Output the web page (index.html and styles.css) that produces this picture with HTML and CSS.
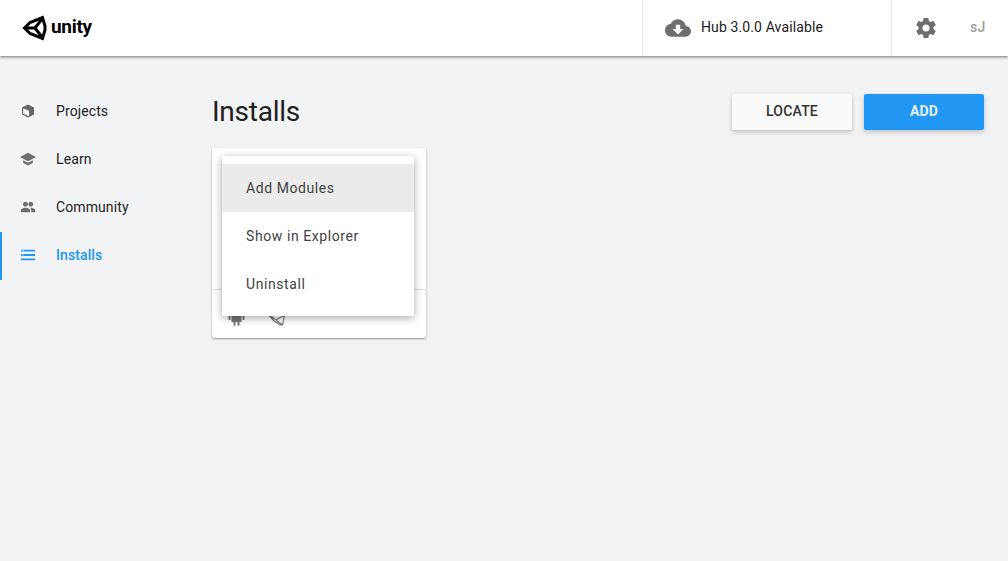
FILE: index.html
```html
<!DOCTYPE html>
<html lang="en">
<head>
<meta charset="utf-8">
<title>Unity Hub</title>
<link rel="stylesheet" href="styles.css">
</head>
<body>
<header class="topbar">
  <div class="brand">
    <svg class="brand-mark" viewBox="0 0 25 26" width="25" height="26"><path fill="none" stroke="#000" stroke-width="3" stroke-linejoin="miter" d="M2.500 13 8 7.500 20.500 2.500 23 11V15L20.500 23.500 8 18.500ZM2.500 13H13M13 13 20 4M13 13 20 22"/></svg>
    <span class="brand-name">unity</span>
  </div>
  <div class="update">
    <svg class="update-icon" viewBox="0 0 24 24" width="26" height="26"><path fill="#6e6e6e" d="M19.35 10.04A7.49 7.49 0 0 0 12 4C9.11 4 6.6 5.64 5.35 8.04A5.994 5.994 0 0 0 0 14c0 3.31 2.69 6 6 6h13c2.76 0 5-2.24 5-5 0-2.64-2.05-4.78-4.65-4.96ZM17 13l-5 5-5-5h3V9h4v4h3Z"/></svg>
    <span class="update-text">Hub 3.0.0 Available</span>
  </div>
  <div class="account">
    <svg class="gear" viewBox="0 0 24 24" width="24" height="24"><path fill="#6e6e6e" d="M19.43 12.98c.04-.32.07-.64.07-.98s-.03-.66-.07-.98l2.11-1.65c.19-.15.24-.42.12-.64l-2-3.46c-.12-.22-.39-.3-.61-.22l-2.49 1c-.52-.4-1.08-.73-1.69-.98l-.38-2.65A.488.488 0 0 0 14 2h-4c-.25 0-.46.18-.49.42l-.38 2.65c-.61.25-1.17.59-1.69.98l-2.49-1c-.23-.09-.49 0-.61.22l-2 3.46c-.13.22-.07.49.12.64l2.11 1.65c-.04.32-.07.65-.07.98s.03.66.07.98l-2.11 1.65c-.19.15-.24.42-.12.64l2 3.46c.12.22.39.3.61.22l2.49-1c.52.4 1.08.73 1.69.98l.38 2.65c.03.24.24.42.49.42h4c.25 0 .46-.18.49-.42l.38-2.65c.61-.25 1.17-.59 1.69-.98l2.49 1c.23.09.49 0 .61-.22l2-3.46c.12-.22.07-.49-.12-.64l-2.11-1.65ZM12 15.5a3.5 3.5 0 1 1 0-7 3.5 3.5 0 0 1 0 7Z"/></svg>
    <span class="initials">sJ</span>
  </div>
</header>
<div class="body">
  <nav class="sidebar">
    <a class="nav-item">
      <svg class="nav-icon" viewBox="0 0 14 14" width="14" height="14"><path fill="#666" d="M7 .4 13 3.400v7.200L7 13.600 1 10.600V3.400Z"/><path fill="#fff" d="M2.200 4.400 8 6.800v5.400L2.200 9.800Z"/></svg>
      <span>Projects</span>
    </a>
    <a class="nav-item">
      <svg class="nav-icon" viewBox="0 0 16 14" width="16" height="14"><path fill="#6e6e6e" d="M8 .8 16 5 8 9.200 0 5ZM3.200 8.300 8 10.800l4.800-2.500v2.600L8 13.500l-4.800-2.600Z"/></svg>
      <span>Learn</span>
    </a>
    <a class="nav-item">
      <svg class="nav-icon" viewBox="0 0 16 12" width="15" height="11"><g fill="#6e6e6e"><circle cx="5.200" cy="3" r="2.600"/><circle cx="11" cy="3" r="2.600"/><path d="M0 12V9.600c0-1.700 3-2.900 5.200-2.900s5.100 1.200 5.100 2.900V12ZM11.600 12V9.400c0-1-.5-1.900-1.300-2.600 2.200-.2 5.700.9 5.700 2.800V12Z"/></g></svg>
      <span>Community</span>
    </a>
    <a class="nav-item is-active">
      <svg class="nav-icon" viewBox="0 0 14 11" width="14" height="11"><path fill="#2196f3" d="M0 0h14v2H0ZM0 4.500h14v2H0ZM0 9h14v2H0Z"/><path fill="#fff" d="M1.500 .6h1v1h-1ZM1.500 5h1v1h-1Z"/></svg>
      <span>Installs</span>
    </a>
  </nav>
  <main class="content">
    <div class="content-head">
      <h1 class="title">Installs</h1>
      <div class="actions">
        <button class="btn btn-light">LOCATE</button>
        <button class="btn btn-primary">ADD</button>
      </div>
    </div>
    <section class="card">
      <div class="card-top"></div>
      <div class="card-footer">
        <svg class="platform-android" viewBox="0 0 17 18" width="17" height="18"><path fill="#757575" d="M3.500 5h10v9h-2v3.500h-2V14h-2v3.500h-2V14h-2ZM.5 5h2v7h-2ZM14.500 5h2v7h-2Z"/></svg>
        <svg class="platform-unity" viewBox="0 0 18 18" width="18" height="18"><path fill="none" stroke="#777" stroke-width="1.200" d="M1 6 7 13 13.500 17 15.500 17 17.500 7M1 6 9 12 15.500 17M9 12 17.500 7"/></svg>
      </div>
      <ul class="menu">
        <li class="menu-item is-hover">Add Modules</li>
        <li class="menu-item">Show in Explorer</li>
        <li class="menu-item">Uninstall</li>
      </ul>
    </section>
  </main>
</div>
</body>
</html>
```
FILE: styles.css
```css
* { box-sizing: border-box; }
html, body { margin: 0; height: 100%; }
body {
  background: #f1f3f5;
  font-family: Roboto, "Liberation Sans", sans-serif;
  color: #212121;
  overflow: hidden;
}
.topbar {
  height: 56px;
  background: #fff;
  display: flex;
  align-items: stretch;
  box-shadow: 0 1px 3px rgba(0,0,0,.55);
  position: relative;
  z-index: 2;
}
.brand {
  width: 642px;
  padding-left: 22px;
  display: flex;
  align-items: center;
  gap: 4px;
}
.brand-mark { display: block; }
.brand-name {
  font-size: 19px;
  font-weight: 700;
  color: #000;
  letter-spacing: -.3px;
  line-height: 20px;
  margin-top: -2px;
}
.update {
  width: 250px;
  border-left: 1px solid #e8e8e8;
  border-right: 1px solid #e8e8e8;
  display: flex;
  align-items: center;
  padding-left: 22px;
  gap: 10px;
  font-size: 14px;
  letter-spacing: .12px;
}
.update-icon { display: block; }
.update-text { margin-bottom: 2px; }
.account {
  flex: 1;
  display: flex;
  align-items: center;
  padding-left: 22px;
}
.gear { display: block; }
.initials {
  margin: 0 0 2px 32px;
  font-size: 14px;
  font-weight: 500;
  color: #9e9e9e;
  letter-spacing: .2px;
}
.body { display: flex; }
.sidebar {
  width: 212px;
  padding-top: 32px;
  flex: none;
}
.nav-item {
  height: 48px;
  display: flex;
  align-items: center;
  position: relative;
  padding: 0 0 2px 56px;
  font-size: 14px;
  letter-spacing: .1px;
  color: #212121;
}
.nav-icon {
  position: absolute;
  left: 28px;
  top: calc(50% - 1px);
  transform: translate(-50%, -50%);
}
.nav-item.is-active {
  color: #2196f3;
  font-weight: 500;
  box-shadow: inset 2px 0 0 #2196f3;
}
.content { flex: 1; padding: 38px 24px 0 0; }
.content-head {
  display: flex;
  justify-content: space-between;
  align-items: center;
  height: 36px;
}
.title {
  margin: 0;
  font-size: 28px;
  font-weight: 400;
  line-height: 36px;
  letter-spacing: -.25px;
  color: #212121;
}
.actions { display: flex; gap: 12px; }
.btn {
  width: 120px;
  height: 36px;
  border: 0;
  padding: 0 0 2px;
  border-radius: 2px;
  font-family: inherit;
  font-size: 14px;
  font-weight: 500;
  letter-spacing: .2px;
  box-shadow: 0 2px 5px rgba(0,0,0,.22);
}
.btn-light { background: #fafafa; color: #333; }
.btn-primary { background: #2196f3; color: #e3f2fd; font-weight: 700; }
.card {
  position: relative;
  margin-top: 18px;
  width: 214px;
  height: 190px;
  background: #fff;
  border-radius: 2px;
  box-shadow: 0 1px 2px rgba(0,0,0,.4);
}
.card-top { height: 142px; border-bottom: 1px solid #e0e0e0; }
.card-footer {
  display: flex;
  align-items: flex-start;
  gap: 22px;
  padding: 18px 0 0 16px;
}
.card-footer svg { display: block; }
.menu {
  position: absolute;
  left: 10px;
  top: 8px;
  width: 192px;
  height: 160px;
  margin: 0;
  padding: 8px 0;
  list-style: none;
  background: #fff;
  border-radius: 2px;
  box-shadow: 0 2px 8px rgba(0,0,0,.35);
}
.menu-item {
  height: 48px;
  line-height: 48px;
  padding-left: 24px;
  font-size: 14px;
  letter-spacing: .58px;
  color: #424242;
}
.menu-item.is-hover { background: #ebebeb; }
```
